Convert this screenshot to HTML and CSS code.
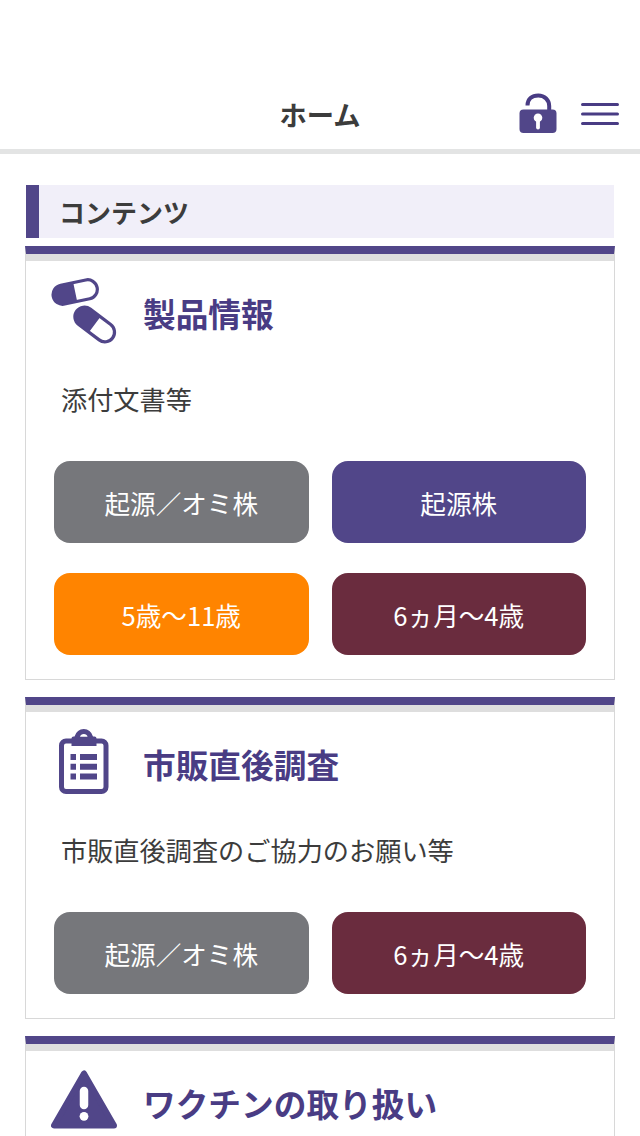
FILE: index.html
```html
<!DOCTYPE html>
<html lang="ja">
<head>
    <meta charset="UTF-8">
    <meta name="viewport" content="width=device-width, initial-scale=1.0">
    <title>ホーム</title>
    <link rel="stylesheet" href="styles.css">
</head>
<body>
    <header class="header">
        <h1 class="header-title">ホーム</h1>
        <div class="header-menu">
            <svg class="icon-lock" width="38" height="40" viewBox="0 0 38 40">
                <path d="M8.5 12.5C8.5 6 13 2.5 19.3 2.5S30.2 7 30.2 13v4" fill="none" stroke="#493c84" stroke-width="4"/>
                <rect x="0.5" y="16.5" width="37" height="23.5" rx="4" fill="#514689"/>
                <circle cx="19" cy="24.8" r="4.3" fill="#fff"/>
                <path d="M19 25v9.5" stroke="#fff" stroke-width="3.8" stroke-linecap="round"/>
            </svg>
            <svg class="icon-menu" width="38" height="24" viewBox="0 0 38 24">
                <path d="M1.5 2.5h35M1.5 12h35M1.5 21.5h35" stroke="#493c84" stroke-width="3" stroke-linecap="round"/>
            </svg>
        </div>
    </header>

    <main class="container">
        <h2 class="section-title">コンテンツ</h2>

        <section class="card">
            <div class="card-head">
                <svg class="card-icon" width="66" height="66" viewBox="0 0 66 66">
                    <g transform="translate(24.2 14) rotate(-12)">
                        <rect x="-22.4" y="-9.6" width="44.8" height="19.2" rx="9.6" fill="#fff" stroke="#514689" stroke-width="3.2"/>
                        <path d="M0 -9.6h-12.8a9.6 9.6 0 0 0 0 19.2h12.8z" fill="#514689"/>
                    </g>
                    <g transform="translate(43.7 46.5) rotate(37)">
                        <rect x="-22.4" y="-9.6" width="44.8" height="19.2" rx="9.6" fill="#fff" stroke="#514689" stroke-width="3.2"/>
                        <path d="M0 -9.6h-12.8a9.6 9.6 0 0 0 0 19.2h12.8z" fill="#514689"/>
                    </g>
                </svg>
                <h3 class="card-title">製品情報</h3>
            </div>
            <p class="card-text">添付文書等</p>
            <div class="buttons">
                <a class="btn btn-gray">起源／オミ株</a>
                <a class="btn btn-purple">起源株</a>
                <a class="btn btn-orange">5歳～11歳</a>
                <a class="btn btn-wine">6ヵ月～4歳</a>
            </div>
        </section>

        <section class="card">
            <div class="card-head">
                <svg class="card-icon" width="66" height="66" viewBox="0 0 66 66">
                    <rect x="10.5" y="12" width="44.5" height="50.5" rx="4.5" fill="#fff" stroke="#514689" stroke-width="5"/>
                    <path d="M20.5 17V9.5Q20.5 7.5 22.5 7.5H23.5Q26 0 32.8 0T42 7.5H43.5Q45.5 7.5 45.5 9.5V17z" fill="#514689"/>
                    <path d="M29 7.8Q29.8 5 32.8 5T36.6 7.8z" fill="#fff"/>
                    <path d="M19.5 25h5.5v6h-5.5zM29 25h17v6H29zM19.5 34.7h5.5v6h-5.5zM29 34.7h17v6H29zM19.5 44.4h5.5v6h-5.5zM29 44.4h17v6H29z" fill="#514689"/>
                </svg>
                <h3 class="card-title">市販直後調査</h3>
            </div>
            <p class="card-text">市販直後調査のご協力のお願い等</p>
            <div class="buttons">
                <a class="btn btn-gray">起源／オミ株</a>
                <a class="btn btn-wine">6ヵ月～4歳</a>
            </div>
        </section>

        <section class="card card-last">
            <div class="card-head">
                <svg class="card-icon" width="66" height="66" viewBox="0 0 66 66">
                    <path d="M33 5.5L3 57.5H63z" fill="#514689" stroke="#514689" stroke-width="6" stroke-linejoin="round"/>
                    <path d="M33 23v14" stroke="#fff" stroke-width="8.5" stroke-linecap="round"/>
                    <circle cx="33" cy="48.3" r="4.4" fill="#fff"/>
                </svg>
                <h3 class="card-title">ワクチンの取り扱い</h3>
            </div>
        </section>
    </main>
</body>
</html>
```
FILE: styles.css
```css
* {
    box-sizing: border-box;
}

body {
    height: 1136px;
    margin: 0;
    background-color: #fff;
    color: #3c3c3c;
    font-family: "Noto Sans CJK JP", "Noto Sans", sans-serif;
    overflow: hidden;
}

h1, h2, h3, p {
    margin: 0;
}

.header {
    display: grid;
    grid-template-columns: 1fr auto 1fr;
    align-items: center;
    height: 154px;
    padding: 79px 21px 0;
    border-bottom: 5px solid #e3e4e4;
}

.header-title {
    grid-column: 2;
    font-size: 27.3px;
    line-height: 40px;
    padding-bottom: 1px;
    font-weight: bold;
}

.header-menu {
    display: flex;
    align-items: center;
    justify-content: flex-end;
    gap: 24px;
}

.icon-lock {
    margin-bottom: 2px;
}

.container {
    height: 982px;
    padding: 31px 25px 0;
    overflow: hidden;
}

.section-title {
    height: 53px;
    margin: 0 1px 8px;
    padding-left: 20px;
    border-left: 13px solid #514689;
    background-color: #f1eff9;
    font-size: 26px;
    line-height: 54px;
}

.card {
    margin-bottom: 17px;
    padding: 0 28px 24px;
    border: 1px solid #d8d8d8;
    border-top: 8px solid #514689;
    box-shadow: inset 0 7px #dedede;
}

.card-last {
    margin-bottom: 0;
    padding-bottom: 0;
    border-bottom: none;
}

.card-head {
    display: flex;
    align-items: center;
    height: 120px;
    gap: 26px;
    margin-left: -3px;
}

.card-icon {
    flex: none;
    margin-top: -7px;
}

.card-title {
    padding-bottom: 2px;
    color: #493c84;
    font-size: 32.7px;
    line-height: 48px;
}

.card-text {
    height: 87px;
    padding-left: 7px;
    font-size: 26.2px;
    line-height: 51px;
}

.buttons {
    display: grid;
    grid-template-columns: 1fr 1fr;
    gap: 30px 23px;
}

.btn {
    display: flex;
    align-items: center;
    justify-content: center;
    height: 82px;
    padding-top: 1px;
    border-radius: 16px;
    color: #fff;
    font-size: 25.6px;
}

.btn-gray {
    background-color: #76777b;
}

.btn-purple {
    background-color: #514689;
}

.btn-orange {
    background-color: #ff8400;
}

.btn-wine {
    background-color: #6a2c3e;
}
```
